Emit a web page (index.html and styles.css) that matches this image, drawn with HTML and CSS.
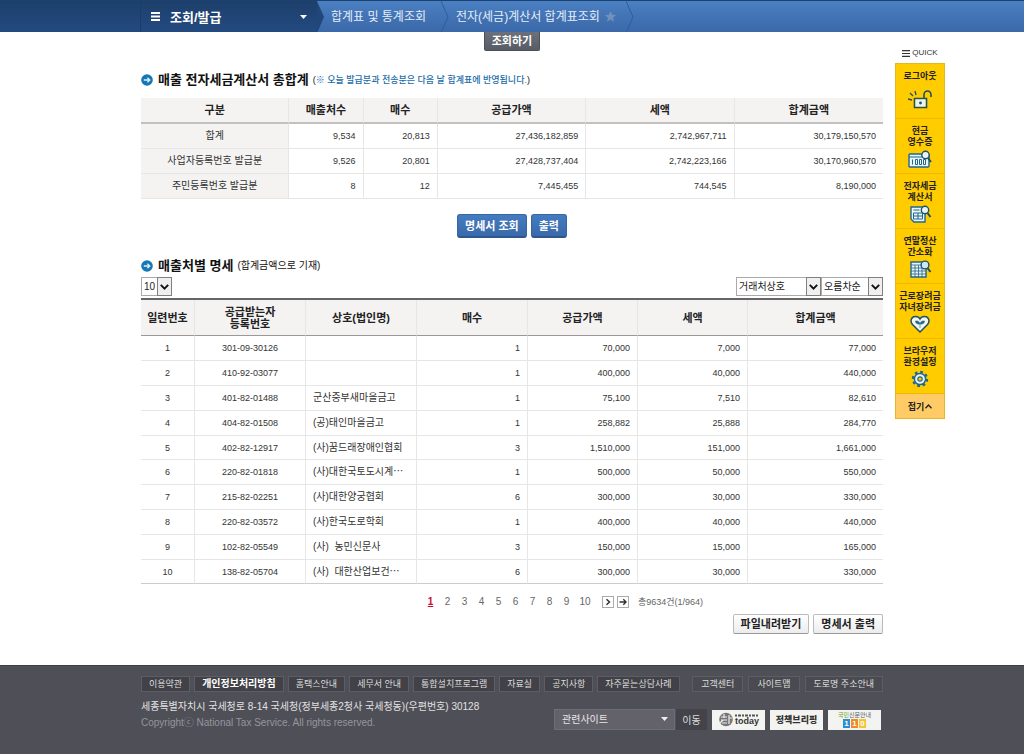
FILE: index.html
```html
<!DOCTYPE html>
<html lang="ko">
<head>
<meta charset="utf-8">
<title>전자(세금)계산서 합계표조회</title>
<link rel="stylesheet" href="styles.css">
</head>
<body>
<header class="topbar">
  <div class="topbar-side"></div>
  <nav class="crumbs" aria-label="현재 위치">
    <button class="crumb-menu" type="button">
      <svg class="burger" width="9" height="9" viewBox="0 0 9 9" aria-hidden="true"><path d="M0 1h9M0 4.500h9M0 8h9" stroke="#fff" stroke-width="1.800"/></svg>
      <span>조회/발급</span>
      <svg class="caret" width="7" height="4" viewBox="0 0 7 4" aria-hidden="true"><path d="M0 0h7L3.500 4z" fill="#fff"/></svg>
    </button>
    <svg class="crumb-tip" width="8" height="32" viewBox="0 0 8 32" aria-hidden="true"><path d="M0 0L7 16L0 32z" fill="#21467a"/></svg>
    <a class="crumb" href="#">합계표 및 통계조회</a>
    <svg class="crumb-gap" width="8" height="32" viewBox="0 0 8 32" aria-hidden="true"><path d="M0 0L7 16L0 32" fill="none" stroke="#305d99"/></svg>
    <a class="crumb" href="#">전자(세금)계산서 합계표조회</a>
    <svg class="star" width="11" height="11" viewBox="0 0 12 12" aria-hidden="true"><path d="M6 0l1.800 4 4.200.400-3.200 2.900 1 4.300L6 9.300l-3.800 2.300 1-4.300L0 4.400 4.200 4z" fill="#7191bb"/></svg>
    <svg class="crumb-gap" width="8" height="32" viewBox="0 0 8 32" aria-hidden="true"><path d="M0 0L7 16L0 32" fill="none" stroke="#305d99"/></svg>
  </nav>
</header>

<div class="page">
  <main class="content">
    <div class="center"><button class="btn-search" type="button">조회하기</button></div>

    <h2 class="title title-first">
      <svg width="12" height="12" viewBox="0 0 12 12" aria-hidden="true"><circle cx="6" cy="6" r="5.800" fill="#1677b5"/><path d="M2.800 6H9M6.400 3.800L8.800 6L6.400 8.200" fill="none" stroke="#d9f1ff" stroke-width="1.300"/></svg>
      <span>매출 전자세금계산서 총합계</span>
      <small class="note">(<em>※ 오늘 발급분과 전송분은 다음 날 합계표에 반영됩니다.</em>)</small>
    </h2>

    <table class="grid summary">
      <thead>
        <tr><th>구분</th><th>매출처수</th><th>매수</th><th class="wide">공급가액</th><th class="wide">세액</th><th class="wide">합계금액</th></tr>
      </thead>
      <tbody>
        <tr><th scope="row">합계</th><td>9,534</td><td>20,813</td><td>27,436,182,859</td><td>2,742,967,711</td><td>30,179,150,570</td></tr>
        <tr><th scope="row">사업자등록번호 발급분</th><td>9,526</td><td>20,801</td><td>27,428,737,404</td><td>2,742,223,166</td><td>30,170,960,570</td></tr>
        <tr><th scope="row">주민등록번호 발급분</th><td>8</td><td>12</td><td>7,445,455</td><td>744,545</td><td>8,190,000</td></tr>
      </tbody>
    </table>

    <div class="center actions">
      <button class="btn-blue" type="button">명세서 조회</button>
      <button class="btn-blue" type="button">출력</button>
    </div>

    <h2 class="title title-second">
      <svg width="12" height="12" viewBox="0 0 12 12" aria-hidden="true"><circle cx="6" cy="6" r="5.800" fill="#1677b5"/><path d="M2.800 6H9M6.400 3.800L8.800 6L6.400 8.200" fill="none" stroke="#d9f1ff" stroke-width="1.300"/></svg>
      <span>매출처별 명세</span>
      <small class="sub">(합계금액으로 기재)</small>
    </h2>

    <div class="filters">
      <div class="pick pick-count">
        <select aria-label="목록 수"><option>10</option></select>
        <span class="pick-arrow"><svg width="9" height="6" viewBox="0 0 9 6" aria-hidden="true"><path d="M0.800 0.800L4.500 4.600L8.200 0.800" fill="none" stroke="#111" stroke-width="1.900"/></svg></span>
      </div>
      <div class="filter-right">
        <div class="pick pick-key">
          <select aria-label="정렬 기준"><option>거래처상호</option></select>
          <span class="pick-arrow"><svg width="9" height="6" viewBox="0 0 9 6" aria-hidden="true"><path d="M0.800 0.800L4.500 4.600L8.200 0.800" fill="none" stroke="#111" stroke-width="1.900"/></svg></span>
        </div>
        <div class="pick pick-order">
          <select aria-label="정렬 순서"><option>오름차순</option></select>
          <span class="pick-arrow"><svg width="9" height="6" viewBox="0 0 9 6" aria-hidden="true"><path d="M0.800 0.800L4.500 4.600L8.200 0.800" fill="none" stroke="#111" stroke-width="1.900"/></svg></span>
        </div>
      </div>
    </div>

    <table class="grid detail">
      <colgroup><col class="c-no"><col class="c-mid"><col class="c-mid"><col class="c-mid"><col class="c-sum"><col class="c-sum"><col></colgroup>
      <thead>
        <tr><th>일련번호</th><th>공급받는자<br>등록번호</th><th>상호(법인명)</th><th>매수</th><th>공급가액</th><th>세액</th><th>합계금액</th></tr>
      </thead>
      <tbody>
        <tr><td>1</td><td>301-09-30126</td><td></td><td>1</td><td>70,000</td><td>7,000</td><td>77,000</td></tr>
        <tr><td>2</td><td>410-92-03077</td><td></td><td>1</td><td>400,000</td><td>40,000</td><td>440,000</td></tr>
        <tr><td>3</td><td>401-82-01488</td><td>군산중부새마을금고</td><td>1</td><td>75,100</td><td>7,510</td><td>82,610</td></tr>
        <tr><td>4</td><td>404-82-01508</td><td>(공)태인마을금고</td><td>1</td><td>258,882</td><td>25,888</td><td>284,770</td></tr>
        <tr><td>5</td><td>402-82-12917</td><td>(사)꿈드래장애인협회</td><td>3</td><td>1,510,000</td><td>151,000</td><td>1,661,000</td></tr>
        <tr><td>6</td><td>220-82-01818</td><td>(사)대한국토도시계⋯</td><td>1</td><td>500,000</td><td>50,000</td><td>550,000</td></tr>
        <tr><td>7</td><td>215-82-02251</td><td>(사)대한양궁협회</td><td>6</td><td>300,000</td><td>30,000</td><td>330,000</td></tr>
        <tr><td>8</td><td>220-82-03572</td><td>(사)한국도로학회</td><td>1</td><td>400,000</td><td>40,000</td><td>440,000</td></tr>
        <tr><td>9</td><td>102-82-05549</td><td>(사)&nbsp; 농민신문사</td><td>3</td><td>150,000</td><td>15,000</td><td>165,000</td></tr>
        <tr><td>10</td><td>138-82-05704</td><td>(사)&nbsp; 대한산업보건⋯</td><td>6</td><td>300,000</td><td>30,000</td><td>330,000</td></tr>
      </tbody>
    </table>

    <nav class="pager" aria-label="페이지">
      <div class="pages"><a class="on" href="#">1</a><a href="#">2</a><a href="#">3</a><a href="#">4</a><a href="#">5</a><a href="#">6</a><a href="#">7</a><a href="#">8</a><a href="#">9</a><a class="ten" href="#">10</a></div>
      <div class="pager-end">
        <button type="button" aria-label="다음"><svg width="8" height="8" viewBox="0 0 8 8" aria-hidden="true"><path d="M2.500 1.200L5.500 4L2.500 6.800" fill="none" stroke="#333" stroke-width="1.500"/></svg></button>
        <button type="button" aria-label="마지막"><svg width="8" height="8" viewBox="0 0 8 8" aria-hidden="true"><path d="M0.500 4H7M4.300 1.300L7 4L4.300 6.700" fill="none" stroke="#333" stroke-width="1.400"/></svg></button>
        <span class="total">총9634건(1/964)</span>
      </div>
    </nav>

    <div class="exports">
      <button class="btn-light" type="button">파일내려받기</button>
      <button class="btn-light" type="button">명세서 출력</button>
    </div>
  </main>

  <aside class="quick">
    <p class="quick-head"><svg width="8" height="7" viewBox="0 0 8 7" aria-hidden="true"><path d="M0 .700h8M0 3.500h8M0 6.300h8" stroke="#333" stroke-width="1.200"/></svg>QUICK</p>
    <div class="quick-list">
      <a href="#">로그아웃
        <svg class="low" width="26" height="20" viewBox="0 0 26 20" aria-hidden="true"><path d="M7.500 9.500h12v9h-12zM17 9V5.500a3.500 3.500 0 0 1 7 0V8" fill="none" stroke="#1f5066" stroke-width="1.600"/><path d="M8.500 10.500h10v7h-10z" fill="#e9f5f5"/><circle cx="13.500" cy="14" r="1.400" fill="#1f5066"/><path d="M1 10l4 1M3 4l3 3M8 2l1 4" stroke="#1f5066" stroke-width="1.300"/></svg></a>
      <a href="#">현금<br>영수증
        <svg width="26" height="18" viewBox="0 0 26 18" aria-hidden="true"><rect x="2" y="4" width="20" height="13" rx="1" fill="#e9f5f5" stroke="#1f6690" stroke-width="1.400"/><path d="M2 7h19" stroke="#1f6690"/><path d="M5.500 9.500v5M8.500 9.500h2v5h-2zM12.500 9.500h2v5h-2zM16.500 9.500h2v5h-2z" fill="none" stroke="#1f6690"/><circle cx="18.500" cy="5" r="3.700" fill="#e9f5f5" stroke="#1f5066" stroke-width="1.400"/><path d="M21 8l3 4" stroke="#1f5066" stroke-width="2"/></svg></a>
      <a href="#">전자세금<br>계산서
        <svg width="26" height="18" viewBox="0 0 26 18" aria-hidden="true"><path d="M4 2h14v15H7l-3-3z" fill="#e9f5f5" stroke="#1f6690" stroke-width="1.400"/><path d="M6.500 5h6M6.500 8h9v6h-9zM6.500 11h9M11 8v6" fill="none" stroke="#1f6690"/><circle cx="18" cy="5" r="3.700" fill="#e9f5f5" stroke="#1f5066" stroke-width="1.400"/><path d="M20.500 8l3 4" stroke="#1f5066" stroke-width="2"/></svg></a>
      <a href="#">연말정산<br>간소화
        <svg width="26" height="18" viewBox="0 0 26 18" aria-hidden="true"><path d="M4 2h15v15H4z" fill="#e9f5f5" stroke="#1f6690" stroke-width="1.400"/><path d="M4 5h14M4 8h15M4 11h15M4 14h15M8 5v12M11.500 5v12M15 5v12" fill="none" stroke="#1f6690" stroke-width=".800"/><circle cx="18" cy="5" r="3.900" fill="#cce9f5" stroke="#1f5066" stroke-width="1.400"/><path d="M20.500 8l3 4" stroke="#1f5066" stroke-width="2"/></svg></a>
      <a href="#">근로장려금<br>자녀장려금
        <svg width="26" height="18" viewBox="0 0 26 18" aria-hidden="true"><path d="M13 17L5.500 9.500C2.500 6 4.500 1.500 8.500 1.500C11 1.500 12.500 3 13 4C13.500 3 15 1.500 17.500 1.500C21.500 1.500 23.500 6 20.500 9.500z" fill="#f4f7ed" stroke="#1f5066" stroke-width="1.500"/><path d="M13 13V9C10 9.500 8.500 8 8.500 6C11 5.500 13 7 13 9C13 7 15 5.500 17.500 6C17.500 8 16 9.500 13 9" fill="#1f6690" stroke="#1f6690" stroke-width=".600"/></svg></a>
      <a href="#">브라우저<br>환경설정
        <svg width="26" height="18" viewBox="0 0 26 18" aria-hidden="true"><circle cx="13" cy="9" r="7" fill="none" stroke="#1f6690" stroke-width="2.400" stroke-dasharray="2.700 2.798"/><circle cx="13" cy="9" r="5.600" fill="#e9f5f5" stroke="#1f6690" stroke-width="1.500"/><circle cx="13" cy="9" r="2.200" fill="#fc0" stroke="#1f6690" stroke-width="1.200"/></svg></a>
      <button type="button">접기<svg width="7" height="5" viewBox="0 0 7 5" aria-hidden="true"><path d="M.500 4.300L3.500 1L6.500 4.300" fill="none" stroke="#222" stroke-width="1.300"/></svg></button>
    </div>
  </aside>
</div>

<footer class="footer">
  <div class="footer-in">
    <div class="foot-links">
      <div class="foot-group">
        <a href="#">이용약관</a><a class="strong" href="#">개인정보처리방침</a><a href="#">홈택스안내</a><a href="#">세무서 안내</a><a href="#">통합설치프로그램</a><a href="#">자료실</a><a href="#">공지사항</a><a href="#">자주묻는상담사례</a>
      </div>
      <div class="foot-group plain">
        <a href="#">고객센터</a><a href="#">사이트맵</a><a href="#">도로명 주소안내</a>
      </div>
    </div>
    <div class="foot-body">
      <div class="foot-text">
        <address>세종특별자치시 국세청로 8-14 국세청(정부세종2청사 국세청동)(우편번호) 30128</address>
        <p>Copyrightⓒ National Tax Service. All rights reserved.</p>
      </div>
      <div class="foot-tools">
        <div class="site">
          <select aria-label="관련사이트"><option>관련사이트</option></select>
          <svg width="7" height="4" viewBox="0 0 7 4" aria-hidden="true"><path d="M0 0h7L3.500 4z" fill="#eee"/></svg>
        </div>
        <button class="go" type="button">이동</button>
        <a class="logo today" href="#">
          <svg width="17" height="15" viewBox="0 0 17 15" aria-hidden="true"><circle cx="8" cy="7.500" r="6.800" fill="#777"/><path d="M3 5h6M6 2v4M3 8h6M4 11h5M11 3v9M11 6h3M2 11l3-3" stroke="#eee" stroke-width="1.200"/></svg>
          <span class="today-text"><svg width="24" height="3" viewBox="0 0 24 3" aria-hidden="true"><path d="M0 1.500h24" stroke="#555" stroke-width="2" stroke-dasharray="2 1 3 1"/></svg><b>today</b></span>
        </a>
        <a class="logo brief" href="#">정책브리핑</a>
        <a class="logo call" href="#"><span class="call-top"><i>국민</i>신문안내</span><span class="call-num"><b class="n1">1</b><b class="n2">1</b><b class="n3">0</b></span></a>
      </div>
    </div>
  </div>
</footer>
</body>
</html>
```

FILE: styles.css
```css
* { box-sizing: border-box; }

body {
  margin: 0;
  min-height: 100vh;
  display: flex;
  flex-direction: column;
  background: #fff;
  color: #333;
  font-family: "Liberation Sans", "Noto Sans CJK KR", sans-serif;
  font-size: 10px;
  line-height: 12px;
}

a { color: inherit; text-decoration: none; }
button, select { font-family: inherit; cursor: pointer; }
svg { display: block; flex: none; }
p, h2 { margin: 0; }

/* top bar */
.topbar {
  display: grid;
  grid-template-columns: 1fr 742px 1fr;
  height: 32px;
  background: linear-gradient(#4a80c2, #3b68a8);
  border-top: 1px solid #1d4272;
}
.topbar-side { background: linear-gradient(#1d3f6b, #234a80); border-right: 1px solid #1b3c69; }
.crumbs { display: flex; align-items: center; height: 31px; overflow: hidden; }
.crumb-menu {
  display: flex;
  align-items: center;
  width: 176px;
  height: 31px;
  padding: 0 10px;
  border: 0;
  background: linear-gradient(#1d3f6b, #234a80);
  color: #fff;
  font-size: 13px;
  font-weight: 700;
}
.burger { margin-right: 10px; }
.caret { margin-left: auto; }
.crumb-tip { margin-right: 6px; }
.crumb { color: #e4edf8; font-size: 12px; white-space: nowrap; }
.crumb-gap { margin: 0 7px 0 15px; }
.star { margin-left: 5px; }
.star + .crumb-gap { margin-left: 10px; }

/* page */
.page { display: grid; grid-template-columns: 1fr 742px 1fr; }
.content { grid-column: 2; }
.center { display: flex; justify-content: center; gap: 4px; }

.btn-search {
  height: 19px;
  padding: 0 7px;
  border: 1px solid #4b505a;
  border-top: 0;
  border-radius: 0 0 2px 2px;
  background: linear-gradient(#6b707b, #575c67);
  color: #fff;
  font-size: 11px;
  font-weight: 700;
  line-height: 17px;
}

.title {
  display: flex;
  align-items: center;
  height: 20px;
  color: #111;
  font-size: 13px;
  line-height: 20px;
}
.title svg { margin-right: 5px; }
.title-first { margin: 19px 0 8px; }
.title-second { margin: 18px 0 1px; }
.note { margin-left: 4px; font-size: 9px; font-weight: 500; }
.note em { color: #1b6ca8; font-style: normal; }
.sub { margin-left: 4px; font-size: 10px; font-weight: 400; }

/* tables */
.grid { width: 100%; border-collapse: separate; border-spacing: 0; table-layout: fixed; }
.grid th, .grid td { padding: 0 7px; border-right: 1px solid #e6e6e6; border-bottom: 1px solid #e6e6e6; }
.grid th:last-child, .grid td:last-child { border-right: 0; }
.grid td { color: #333; font-size: 9px; text-align: right; }
.grid thead th { background: #f4f3f2; color: #222; font-size: 11px; font-weight: 700; }

.summary th { width: 10%; }
.summary th:first-child, .summary .wide { width: 20%; }
.summary thead th { height: 26px; border-bottom: 2px solid #c3c1bf; }
.summary tbody th { background: #f4f3f2; color: #333; font-size: 10px; font-weight: 400; }
.summary tbody tr { height: 25px; }

.c-no { width: 54px; }
.c-mid { width: 111px; }
.c-sum { width: 110px; }
.detail { border-top: 2px solid #666; }
.detail thead th { height: 36px; padding: 0; border-bottom-color: #999; line-height: 12px; }
.detail tbody tr { height: 25px; }
.detail tbody tr:nth-child(5n) { height: 24px; }
.detail tbody tr:last-child td { border-bottom-color: #ccc; }
.detail td:first-child, .detail td:nth-child(2) { text-align: center; }
.detail td:nth-child(3) { font-size: 10px; text-align: left; white-space: nowrap; }

.actions { margin-top: 15px; }
.btn-blue {
  height: 24px;
  padding: 0 7px;
  border: 1px solid #3565a3;
  border-bottom: 2px solid #2d568e;
  border-radius: 3px;
  background: linear-gradient(#447cc0, #3a69a9);
  color: #fff;
  font-size: 11px;
  font-weight: 700;
  line-height: 20px;
}

/* filters */
.filters { display: flex; justify-content: space-between; margin-bottom: 2px; }
.filter-right { display: flex; }
.pick { position: relative; height: 19px; }
.pick select {
  appearance: none;
  width: 100%;
  height: 100%;
  padding: 0 2px;
  border: 1px solid #aaa;
  border-radius: 0;
  background: #fff;
  color: #222;
  font-size: 10px;
}
.pick-arrow {
  position: absolute;
  top: 0;
  right: 0;
  bottom: 0;
  width: 15px;
  display: flex;
  align-items: center;
  justify-content: center;
  border: 1px solid #808080;
  background: #efefef;
  pointer-events: none;
}
.pick-count { width: 31px; }
.pick-key { width: 85px; }
.pick-order { width: 62px; }

/* pager */
.pager {
  display: grid;
  grid-template-columns: 1fr auto 1fr;
  align-items: center;
  height: 12px;
  margin-top: 12px;
  color: #666;
}
.pages { display: flex; grid-column: 2; padding-right: 7px; }
.pages a { width: 17px; text-align: center; }
.pages .on { color: #c8102e; font-weight: 700; text-decoration: underline; }
.pages .ten { width: 20px; }
.pager-end { display: flex; align-items: center; gap: 3px; }
.pager-end button {
  display: grid;
  place-items: center;
  width: 12px;
  height: 12px;
  padding: 0;
  border: 1px solid #aaa;
  background: #fff;
}
.total { margin-left: 6px; font-size: 9px; }

.exports { display: flex; justify-content: flex-end; gap: 4px; margin-top: 6px; }
.btn-light {
  height: 20px;
  padding: 0 7px;
  border: 1px solid #bbb;
  border-bottom-color: #999;
  border-radius: 2px;
  background: linear-gradient(#fff, #ececec);
  color: #222;
  font-size: 11px;
  font-weight: 700;
  line-height: 16px;
}

/* quick menu */
.quick { width: 50px; margin: 15px 0 0 12px; }
.quick-head {
  display: flex;
  align-items: center;
  justify-content: center;
  gap: 2px;
  height: 16px;
  padding-bottom: 4px;
  color: #333;
  font-size: 8px;
}
.quick-list { border: 1px solid #e5b722; background: #fc0; }
.quick-list a {
  display: block;
  height: 55px;
  padding-top: 7px;
  border-bottom: 1px solid #f0b800;
  color: #222;
  font-size: 9px;
  font-weight: 700;
  line-height: 11px;
  text-align: center;
  white-space: nowrap;
}
.quick-list a svg { margin: 2px auto 0; }
.quick-list a .low { margin-top: 7px; }
.quick-list button {
  display: flex;
  align-items: center;
  justify-content: center;
  gap: 1px;
  width: 100%;
  height: 24px;
  padding: 0;
  border: 0;
  background: #ffcb66;
  color: #222;
  font-size: 9px;
  font-weight: 700;
}

/* footer */
.footer {
  flex: 1;
  margin-top: 31px;
  padding-top: 10px;
  border-top: 1px solid #3e3e44;
  background: #4f4f57;
  color: #ccc;
}
.footer-in { width: 742px; margin: 0 auto; }
.foot-links { display: flex; justify-content: space-between; }
.foot-group { display: flex; gap: 4px; }
.foot-group a {
  height: 16px;
  padding: 0 7px;
  border: 1px solid #5d5d65;
  background: #414147;
  color: #ddd;
  font-size: 9px;
  line-height: 14px;
  white-space: nowrap;
}
.foot-group .strong { color: #fff; font-size: 10px; font-weight: 700; }
.foot-group.plain { gap: 5px; }
.foot-group.plain a { padding: 0 8px; background: #4a4a51; }
.foot-body { display: flex; justify-content: space-between; margin-top: 7px; }
.foot-text { line-height: 16px; }
.foot-text address { color: #e2e2e2; font-style: normal; }
.foot-text p { color: #95959c; }
.foot-tools { display: flex; align-items: center; gap: 5px; height: 21px; margin: 10px 2px 0 0; }
.site { position: relative; width: 121px; height: 21px; }
.site select {
  appearance: none;
  width: 100%;
  height: 100%;
  padding: 0 7px;
  border: 1px solid #6e6e77;
  border-radius: 0;
  background: #63626b;
  color: #e6e6e6;
  font-size: 10px;
}
.site svg { position: absolute; right: 7px; top: 8px; pointer-events: none; }
.go {
  width: 31px;
  height: 21px;
  margin-left: -4px;
  padding: 0;
  border: 0;
  background: #434349;
  color: #ddd;
  font-size: 10px;
}
.logo {
  display: flex;
  align-items: center;
  justify-content: center;
  width: 53px;
  height: 20px;
  background: #f3f3f1;
  color: #333;
}
.today-text { display: flex; flex-direction: column; font-size: 9px; line-height: 9px; }
.brief { font-size: 9px; font-weight: 900; }
.call { flex-direction: column; }
.call-top { color: #55606b; font-size: 6px; line-height: 8px; }
.call-top i { color: #6aa52c; font-style: normal; }
.call-num { display: flex; gap: 1px; color: #fff; font-size: 8px; line-height: 9px; }
.call-num b { width: 7px; text-align: center; }
.n1 { background: #2a8fd0; }
.n2 { background: #f08a24; }
.n3 { background: #f5c431; }
```
